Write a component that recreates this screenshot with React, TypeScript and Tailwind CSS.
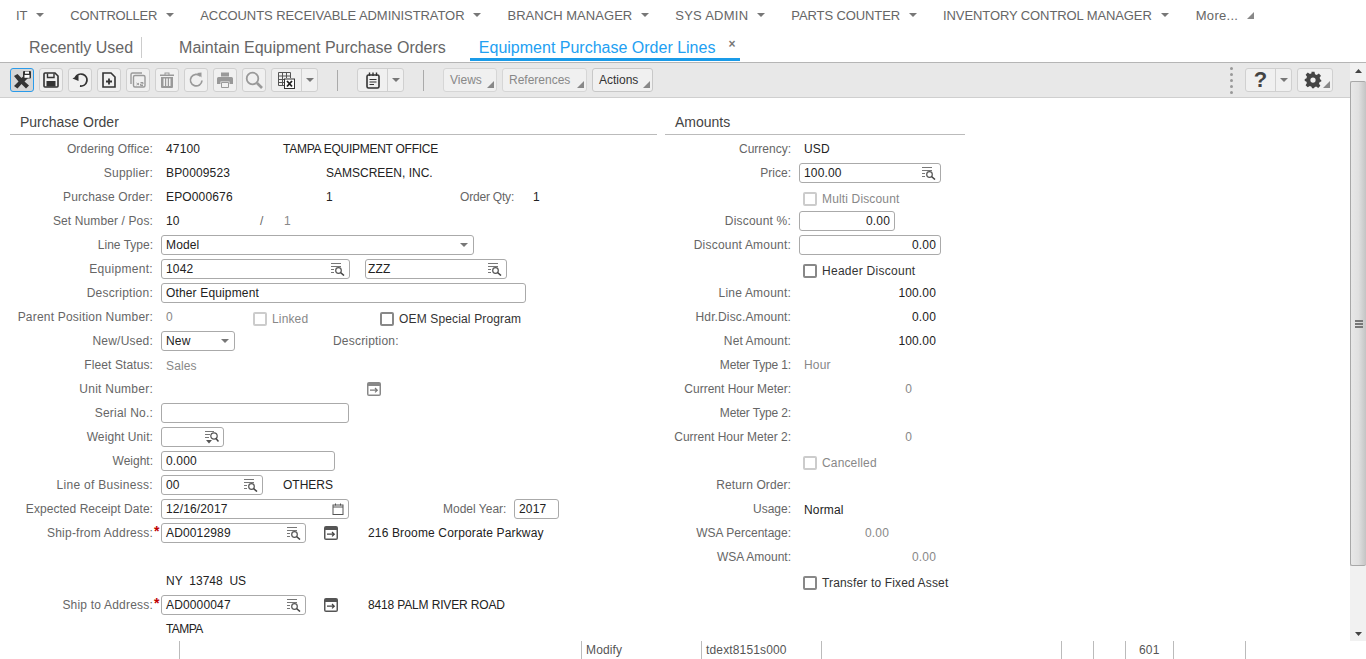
import type { ReactNode } from 'react';

const navItems = [
  { label: 'IT', track: 'tracking-[-0.1px]' },
  { label: 'CONTROLLER', track: 'tracking-[-0.2px]' },
  { label: 'ACCOUNTS RECEIVABLE ADMINISTRATOR', track: 'tracking-[-0.07px]' },
  { label: 'BRANCH MANAGER', track: 'tracking-[0.04px]' },
  { label: 'SYS ADMIN', track: 'tracking-[0.25px]' },
  { label: 'PARTS COUNTER', track: 'tracking-[-0.1px]' },
  { label: 'INVENTORY CONTROL MANAGER', track: 'tracking-[-0.1px]' },
];

const Corner = ({ className = '' }: { className?: string }) => (
  <svg width="7" height="7" viewBox="0 0 7 7" className={className}>
    <path d="M7 0V7H0Z" fill="#888" />
  </svg>
);

const Caret = () => (
  <svg width="8" height="4" viewBox="0 0 8 4" className="shrink-0">
    <path d="M0 0H8L4 4Z" fill="#777" />
  </svg>
);

const Lookup = () => (
  <svg width="14" height="13" viewBox="0 0 14 13" className="shrink-0">
    <path d="M0 .5H10M0 3.5H10M0 6.5H3M0 9.5H3" stroke="#777" fill="none" />
    <circle cx="7.5" cy="7.5" r="2.8" stroke="#555" strokeWidth="1.2" fill="#fff" />
    <path d="M9.5 9.5L13 12.5" stroke="#444" strokeWidth="1.6" />
  </svg>
);

const LookupDown = () => (
  <svg width="14" height="13" viewBox="0 0 14 13" className="shrink-0">
    <path d="M0 .5H9M0 3.5H5M0 6.5H4" stroke="#777" fill="none" />
    <circle cx="9" cy="5" r="3.2" stroke="#555" strokeWidth="1.2" fill="#fff" />
    <path d="M11 7.5L13.5 10.5" stroke="#444" strokeWidth="1.5" />
    <path d="M1 9H7L4 12.5Z" fill="#555" />
  </svg>
);

const Zoom = ({ dark = true }: { dark?: boolean }) => (
  <svg width="14" height="14" viewBox="0 0 14 14" className="shrink-0">
    <rect x="0" y="0" width="14" height="14" rx="2" fill={dark ? '#555' : '#888'} />
    <rect x="1.5" y="4" width="11" height="8.5" fill="#fff" />
    <path d="M3 8.2H10M8 6L10.3 8.2L8 10.4" stroke={dark ? '#444' : '#777'} fill="none" strokeWidth="1.2" />
  </svg>
);

const Field = ({ w, value = '', icon, pad = 'pl-1' }: { w: string; value?: string; icon?: ReactNode; pad?: string }) => (
  <div className={`${w} ${pad} h-5 shrink-0 rounded-[3px] border border-[#aaa] bg-white pr-1 flex items-center justify-between text-[#222]`}>
    <span className="flex-1">{value}</span>
    {icon}
  </div>
);

const Check = ({ label, disabled, className = '' }: { label: string; disabled?: boolean; className?: string }) => (
  <div className={`flex items-center gap-[5px] shrink-0 ${className}`}>
    <span className={`w-[14px] h-[14px] rounded-[2px] border-2 bg-white ${disabled ? 'border-[#ccc]' : 'border-[#888]'}`} />
    <span className={disabled ? 'text-[#888]' : 'text-[#333]'}>{label}</span>
  </div>
);

const Row = ({ label, required, track = 'tracking-[0.2px]', children }: { label?: string; required?: boolean; track?: string; children?: ReactNode }) => (
  <div className="h-6 flex items-center">
    <div className={`relative w-[153px] shrink-0 text-right text-[#666] ${track}`}>
      {label}
      {required && <span className="absolute left-[154px] -top-[3px] text-[#c00000] text-[14px] font-bold">*</span>}
    </div>
    <div className="ml-2 flex items-center flex-1">{children}</div>
  </div>
);

const RightRow = ({ label, track = 'tracking-normal', children }: { label?: string; track?: string; children?: ReactNode }) => (
  <div className="h-6 flex items-center">
    <div className={`w-[126px] shrink-0 text-right text-[#666] ${track}`}>{label}</div>
    <div className="ml-2 flex items-center flex-1">{children}</div>
  </div>
);

const ToolButton = ({ children, active }: { children: ReactNode; active?: boolean }) => (
  <div className={`w-6 h-6 rounded-[3px] border flex items-center justify-center shrink-0 ${active ? 'border-[#2a9bea] bg-[#d6d6d6]' : 'border-[#d0d0d0] bg-[#f0f0f0]'}`}>
    {children}
  </div>
);

const SplitButton = ({ children, w }: { children: ReactNode; w: string }) => (
  <div className={`${w} h-6 rounded-[3px] border border-[#d0d0d0] bg-[#f0f0f0] flex items-center shrink-0`}>
    <div className="flex-1 h-full flex items-center justify-center border-r border-[#d0d0d0]">{children}</div>
    <div className="w-[15px] flex justify-center"><Caret /></div>
  </div>
);

const MenuButton = ({ label, w, disabled }: { label: string; w: string; disabled?: boolean }) => (
  <div className={`${w} relative h-6 rounded-[3px] border bg-[#f0f0f0] flex items-center pl-[6px] shrink-0 ${disabled ? 'border-[#d6d6d6] text-[#888]' : 'border-[#c8c8c8] text-[#333]'}`}>
    {label}
    <Corner className="absolute right-[2px] bottom-[3px]" />
  </div>
);

export default function App() {
  return (
    <div className="w-[1366px] h-[659px] overflow-hidden bg-white text-xs tracking-[0.15px] flex flex-col" style={{ fontFamily: '"Liberation Sans", Arial, sans-serif' }}>
      {/* top menu */}
      <div className="h-[31px] pl-4 flex items-center gap-[26px] text-[13px] text-[#666] shrink-0">
        {navItems.map(n => (
          <div key={n.label} className="flex items-center gap-[9px]">
            <span className={n.track}>{n.label}</span>
            <Caret />
          </div>
        ))}
        <div className="flex items-center gap-[9px] ml-px tracking-[0.3px] text-[#666]">
          <span>More...</span>
          <Corner />
        </div>
      </div>

      {/* tabs */}
      <div className="h-[32px] pl-[29px] flex items-start text-base tracking-normal text-[#666] border-b border-[#b5b5b5] shrink-0">
        <div className="h-[21px] flex items-center pr-2 border-r border-[#ccc] mt-[6px]">Recently Used</div>
        <div className="ml-[37px] h-[21px] flex items-center mt-[6px]">Maintain Equipment Purchase Orders</div>
        <div className="ml-[24px] w-[270px] h-[30px] pl-[9px] flex items-start border-b-[3px] border-[#1a9be8] text-[#22a0f2]">
          <span className="mt-[6px] h-[21px] flex items-center">Equipment Purchase Order Lines</span>
          <span className="ml-[13px] mt-[6px] text-[12px] leading-[14px] font-bold text-[#777]">×</span>
        </div>
      </div>

      <div className="flex-1 min-h-0 flex">
        <div className="flex-1 min-w-0 flex flex-col">
          {/* toolbar */}
          <div className="h-[35px] bg-[#e8e8e8] border-b border-[#cfcfcf] pl-[10px] pr-[17px] flex items-center tracking-normal shrink-0">
            <div className="flex items-center gap-[5px]">
              <ToolButton active>
                <svg width="20" height="20" viewBox="0 0 20 20">
                  <path d="M2 6L5.5 4L9.5 8L12 5.5L16 8L12.5 11.5L17 15.5L14 18.5L9.5 14L5.5 18.5L2 16L6.5 11.5Z" fill="#333" />
                  <rect x="11" y="1" width="8" height="7.5" rx="1" fill="#333" />
                  <rect x="13" y="1.5" width="4" height="2.2" fill="#fff" />
                  <rect x="12.5" y="5" width="5" height="2.8" fill="#fff" />
                </svg>
              </ToolButton>
              <ToolButton>
                <svg width="16" height="16" viewBox="0 0 16 16">
                  <path d="M2 1H12L15 4V14A1 1 0 0 1 14 15H2A1 1 0 0 1 1 14V2A1 1 0 0 1 2 1Z" fill="none" stroke="#333" strokeWidth="1.6" />
                  <path d="M4.5 1.5V5.5H11V1.5" fill="none" stroke="#333" strokeWidth="1.4" />
                  <rect x="3.5" y="9" width="9" height="5.5" fill="#333" />
                </svg>
              </ToolButton>
              <ToolButton>
                <svg width="16" height="16" viewBox="0 0 16 16" fill="none">
                  <path d="M3.5 5.5A6 6 0 1 1 8 14" stroke="#333" strokeWidth="1.8" />
                  <path d="M0.5 6.5L6.5 3V9Z" fill="#333" />
                </svg>
              </ToolButton>
              <ToolButton>
                <svg width="14" height="16" viewBox="0 0 14 16" fill="none">
                  <path d="M1 1H9L13 5V15H1Z" stroke="#333" strokeWidth="1.6" />
                  <path d="M4 9.5H10M7 6.5V12.5" stroke="#333" strokeWidth="1.8" />
                </svg>
              </ToolButton>
              <ToolButton>
                <svg width="16" height="16" viewBox="0 0 16 16" fill="none">
                  <path d="M1 12V2.5A1.5 1.5 0 0 1 2.5 1H12" stroke="#999" strokeWidth="1.4" />
                  <rect x="3.5" y="3.5" width="11.5" height="11.5" rx="1.5" stroke="#999" strokeWidth="1.4" />
                  <path d="M6.5 11L9 13M9 11L6.5 13M10.5 10.5H13V12H10.5V13.5H13" stroke="#999" />
                </svg>
              </ToolButton>
              <ToolButton>
                <svg width="14" height="16" viewBox="0 0 14 16" fill="#999">
                  <path d="M0 2.5H14V4H0ZM4.5 2.5V.5H9.5V2.5H8.5V1.5H5.5V2.5Z" />
                  <path d="M1 5H13V15A1 1 0 0 1 12 16H2A1 1 0 0 1 1 15ZM3.5 6.5V14H5V6.5ZM6.2 6.5V14H7.8V6.5ZM9 6.5V14H10.5V6.5Z" fillRule="evenodd" />
                </svg>
              </ToolButton>
              <ToolButton>
                <svg width="16" height="16" viewBox="0 0 16 16" fill="none">
                  <path d="M12.5 4.2A5.8 5.8 0 1 0 14 8.5" stroke="#999" strokeWidth="1.7" />
                  <path d="M9 1L13.5 .5V5.5Z" fill="#999" />
                </svg>
              </ToolButton>
              <ToolButton>
                <svg width="16" height="16" viewBox="0 0 16 16" fill="#999">
                  <path d="M4 0.5H12V4.5H4Z" />
                  <path d="M1.5 5H14.5A1.5 1.5 0 0 1 16 6.5V12H12.5V9.5H3.5V12H0V6.5A1.5 1.5 0 0 1 1.5 5Z" />
                  <path d="M4.5 10.5H11.5V15.5H4.5Z" fill="#f0f0f0" stroke="#999" />
                </svg>
              </ToolButton>
              <ToolButton>
                <svg width="18" height="18" viewBox="0 0 18 18" fill="none">
                  <circle cx="7.5" cy="7.5" r="5.8" stroke="#999" strokeWidth="1.8" />
                  <path d="M12 12L17 17" stroke="#999" strokeWidth="2.6" />
                </svg>
              </ToolButton>
              <SplitButton w="w-[47px]">
                <svg width="17" height="17" viewBox="0 0 17 17" fill="none">
                  <path d="M.5 .5H12.5V6M.5 .5V13.5H6M.5 4H12.5M.5 7.5H6M.5 10.5H6M4.5 .5V13.5M8.5 .5V6" stroke="#555" />
                  <rect x="6.5" y="7" width="10" height="9.5" fill="#fff" stroke="#333" />
                  <path d="M9 9L14 14.5M14 9L9 14.5" stroke="#222" strokeWidth="1.8" />
                </svg>
              </SplitButton>
            </div>
            <div className="w-px h-[21px] bg-[#aaa] ml-[19px]" />
            <div className="ml-[19px]">
              <SplitButton w="w-[47px]">
                <svg width="14" height="17" viewBox="0 0 14 17" fill="none">
                  <rect x="1" y="3" width="12" height="13" rx="1.5" stroke="#333" strokeWidth="1.6" />
                  <path d="M3.5 .5V4M7 .5V4M10.5 .5V4" stroke="#333" strokeWidth="1.4" />
                  <path d="M3.5 7.5H10.5M3.5 10H10.5M3.5 12.5H8" stroke="#333" strokeWidth="1.2" />
                </svg>
              </SplitButton>
            </div>
            <div className="w-px h-[21px] bg-[#aaa] ml-[19px]" />
            <div className="ml-[19px] flex items-center gap-[5px]">
              <MenuButton label="Views" w="w-[54px]" disabled />
              <MenuButton label="References" w="w-[85px]" disabled />
              <MenuButton label="Actions" w="w-[61px]" />
            </div>
            <div className="ml-auto flex items-center">
              <div className="flex flex-col gap-[3px] mr-3">
                {[0, 1, 2, 3, 4].map(i => <span key={i} className="w-[3px] h-[3px] rounded-full bg-[#999]" />)}
              </div>
              <div className="w-[47px] h-6 rounded-[3px] border border-[#d0d0d0] bg-[#f0f0f0] flex items-center">
                <div className="w-[30px] h-full flex items-center justify-center border-r border-[#d0d0d0] text-[22px] font-bold text-[#444]">?</div>
                <div className="flex-1 flex justify-center"><Caret /></div>
              </div>
              <div className="relative w-9 h-6 ml-[5px] rounded-[3px] border border-[#d0d0d0] bg-[#f0f0f0] flex items-center pl-[6px]">
                <svg width="18" height="18" viewBox="0 0 24 24" fill="#444">
                  <path fillRule="evenodd" d="M10 1H14L14.7 4.3L16.9 5.2L19.8 3.4L22.6 6.2L20.8 9.1L21.7 11.3L23 12V14L20.9 14.7L20 16.9L21.8 19.8L19 22.6L16.1 20.8L14 21.7L13.3 23H10.7L10 20.9L7.8 20L4.9 21.8L2.1 19L3.9 16.1L3 14L1 13.3V10.7L3.1 10L4 7.8L2.2 4.9L5 2.1L7.9 3.9L10 3ZM12 8.5A3.5 3.5 0 1 0 12 15.5A3.5 3.5 0 1 0 12 8.5Z" />
                </svg>
                <Corner className="absolute right-[2px] bottom-[3px]" />
              </div>
            </div>
          </div>

          {/* form area */}
          <div className="flex-1 min-h-0 flex overflow-hidden">
            <div className="w-[665px] shrink-0">
              <div className="mt-[12px] ml-[10px] w-[647px] h-[25px] border-b border-[#bbb] pl-[10px] pt-[3px] text-[14px] tracking-normal text-[#444] leading-[18px] mb-[2px]">Purchase Order</div>
              <Row label="Ordering Office:" track="tracking-[0.1px]"><span className="ml-[5px] w-[117px] text-[#222]">47100</span><span className="text-[#222] tracking-[-0.26px]">TAMPA EQUIPMENT OFFICE</span></Row>
              <Row label="Supplier:"><span className="ml-[5px] w-[160px] text-[#222]">BP0009523</span><span className="text-[#222] tracking-normal">SAMSCREEN, INC.</span></Row>
              <Row label="Purchase Order:" track="tracking-[0.13px]"><span className="ml-[5px] w-[160px] text-[#222]">EPO000676</span><span className="w-[134px] text-[#222]">1</span><span className="w-[73px] text-[#666] tracking-[-0.2px]">Order Qty:</span><span className="text-[#222]">1</span></Row>
              <Row label="Set Number / Pos:" track="tracking-[0.12px]"><span className="ml-[5px] w-[94px] text-[#222]">10</span><span className="w-[24px] text-[#666]">/</span><span className="text-[#888]">1</span></Row>
              <Row label="Line Type:" track="tracking-normal">
                <div className="w-[313px] h-5 rounded-[3px] border border-[#aaa] pl-1 pr-[5px] flex items-center justify-between text-[#222]">Model<Caret /></div>
              </Row>
              <Row label="Equipment:" track="tracking-[0.3px]">
                <Field w="w-[189px]" value="1042" icon={<Lookup />} />
                <div className="ml-[15px]"><Field w="w-[142px]" pad="pl-[2px]" value="ZZZ" icon={<Lookup />} /></div>
              </Row>
              <Row label="Description:" track="tracking-[0.25px]"><Field w="w-[365px]" value="Other Equipment" /></Row>
              <Row label="Parent Position Number:">
                <span className="ml-[5px] w-[87px] text-[#888]">0</span>
                <Check label="Linked" disabled className="w-[127px] mt-[3px]" />
                <Check label="OEM Special Program" className="mt-[3px]" />
              </Row>
              <Row label="New/Used:">
                <div className="w-[74px] h-5 rounded-[3px] border border-[#aaa] pl-1 pr-[5px] flex items-center justify-between text-[#222]">New<Caret /></div>
                <span className="ml-[98px] text-[#666] tracking-[0.2px]">Description:</span>
              </Row>
              <Row label="Fleet Status:" track="tracking-[0.1px]"><span className="ml-[5px] mt-[1px] text-[#888]">Sales</span></Row>
              <Row label="Unit Number:" track="tracking-[0.25px]"><div className="ml-[206px]"><Zoom dark={false} /></div></Row>
              <Row label="Serial No.:"><Field w="w-[188px]" /></Row>
              <Row label="Weight Unit:" track="tracking-[0.1px]"><Field w="w-[63px]" icon={<LookupDown />} /></Row>
              <Row label="Weight:" track="tracking-normal"><Field w="w-[174px]" value="0.000" /></Row>
              <Row label="Line of Business:" track="tracking-[0.3px]"><Field w="w-[102px]" value="00" icon={<Lookup />} /><span className="ml-5 text-[#222] tracking-normal">OTHERS</span></Row>
              <Row label="Expected Receipt Date:" track="tracking-[0.05px]">
                <Field w="w-[188px]" value="12/16/2017" icon={
                  <svg width="12" height="12" viewBox="0 0 12 12" fill="none">
                    <rect x="1" y="2" width="10" height="9.5" stroke="#555" />
                    <path d="M1 4H11M3.5 .5V2.5M8.5 .5V2.5" stroke="#555" />
                  </svg>
                } />
                <span className="ml-[94px] w-[71px] text-[#666] tracking-normal">Model Year:</span>
                <Field w="w-[45px]" value="2017" />
              </Row>
              <Row label="Ship-from Address:" required track="tracking-[0.22px]">
                <Field w="w-[145px]" value="AD0012989" icon={<Lookup />} />
                <div className="ml-[18px]"><Zoom /></div>
                <span className="ml-[30px] text-[#222]">216 Broome Corporate Parkway</span>
              </Row>
              <Row />
              <Row><span className="ml-[5px] text-[#222] tracking-normal">NY&nbsp;&nbsp;13748&nbsp;&nbsp;US</span></Row>
              <Row label="Ship to Address:" required>
                <Field w="w-[145px]" value="AD0000047" icon={<Lookup />} />
                <div className="ml-[18px]"><Zoom /></div>
                <span className="ml-[30px] text-[#222] tracking-[-0.15px]">8418 PALM RIVER ROAD</span>
              </Row>
              <Row><span className="ml-[5px] text-[#222] tracking-[-0.6px]">TAMPA</span></Row>
            </div>

            <div className="w-[301px] shrink-0">
              <div className="mt-[12px] w-[300px] h-[25px] border-b border-[#bbb] pl-[10px] pt-[3px] text-[14px] tracking-normal text-[#444] leading-[18px] mb-[2px]">Amounts</div>
              <RightRow label="Currency:"><span className="ml-[5px] text-[#222]">USD</span></RightRow>
              <RightRow label="Price:"><Field w="w-[142px]" value="100.00" icon={<Lookup />} /></RightRow>
              <RightRow><Check label="Multi Discount" disabled className="ml-1 mt-[3px]" /></RightRow>
              <RightRow label="Discount %:" track="tracking-[0.2px]"><div className="w-[96px] h-5 rounded-[3px] border border-[#aaa] px-1 flex items-center justify-end text-[#222]">0.00</div></RightRow>
              <RightRow label="Discount Amount:" track="tracking-[0.2px]"><div className="w-[142px] h-5 rounded-[3px] border border-[#aaa] px-1 flex items-center justify-end text-[#222]">0.00</div></RightRow>
              <RightRow><Check label="Header Discount" className="ml-1 mt-[3px] tracking-[0.27px]" /></RightRow>
              <RightRow label="Line Amount:" track="tracking-[0.2px]"><span className="w-[137px] text-right text-[#222]">100.00</span></RightRow>
              <RightRow label="Hdr.Disc.Amount:" track="tracking-[0.13px]"><span className="w-[137px] text-right text-[#222]">0.00</span></RightRow>
              <RightRow label="Net Amount:" track="tracking-[0.1px]"><span className="w-[137px] text-right text-[#222]">100.00</span></RightRow>
              <RightRow label="Meter Type 1:" track="tracking-[-0.15px]"><span className="ml-[5px] text-[#888]">Hour</span></RightRow>
              <RightRow label="Current Hour Meter:"><span className="w-[113px] text-right text-[#888]">0</span></RightRow>
              <RightRow label="Meter Type 2:" track="tracking-[-0.15px]" />
              <RightRow label="Current Hour Meter 2:"><span className="w-[113px] text-right text-[#888]">0</span></RightRow>
              <RightRow><Check label="Cancelled" disabled className="ml-1 mt-[3px]" /></RightRow>
              <RightRow label="Return Order:" track="tracking-[0.1px]" />
              <RightRow label="Usage:"><span className="ml-[5px] mt-[1px] text-[#222]">Normal</span></RightRow>
              <RightRow label="WSA Percentage:"><span className="w-[90px] text-right text-[#888]">0.00</span></RightRow>
              <RightRow label="WSA Amount:"><span className="w-[137px] text-right text-[#888]">0.00</span></RightRow>
              <RightRow><Check label="Transfer to Fixed Asset" className="ml-1 mt-[3px]" /></RightRow>
            </div>
          </div>
        </div>

        {/* scrollbar */}
        <div className="w-4 bg-[#f1f1f1] flex flex-col items-center shrink-0">
          <svg width="7" height="4" viewBox="0 0 7 4" className="mt-[6px] shrink-0"><path d="M0 4H7L3.5 0Z" fill="#444" /></svg>
          <div className="mt-[8px] w-4 h-[485px] rounded-[2px] border-l border-t border-b border-[#a8a8a8] bg-gradient-to-r from-[#e8e8e8] via-[#e0e0e0] to-[#c4c4c4] flex flex-col items-center justify-center gap-px">
            <span className="w-[8px] h-[2px] bg-[#777]" />
            <span className="w-[8px] h-[2px] bg-[#777]" />
            <span className="w-[8px] h-[2px] bg-[#777]" />
          </div>
          <svg width="7" height="4" viewBox="0 0 7 4" className="mt-auto mb-[5px] shrink-0"><path d="M0 0H7L3.5 4Z" fill="#444" /></svg>
        </div>
      </div>

      {/* status bar */}
      <div className="h-[18px] flex text-[#555] shrink-0 leading-[18px]">
        <div className="w-[180px] border-r border-[#bbb]" />
        <div className="w-[402px] border-r border-[#bbb]" />
        <div className="w-[120px] pl-1 border-r border-[#bbb]">Modify</div>
        <div className="w-[120px] pl-1 border-r border-[#bbb]">tdext8151s000</div>
        <div className="w-[240px] border-r border-[#bbb]" />
        <div className="w-8 border-r border-[#bbb]" />
        <div className="w-8 border-r border-[#bbb]" />
        <div className="w-12 pl-[13px] border-r border-[#bbb]">601</div>
        <div className="w-[72px] border-r border-[#bbb]" />
      </div>
    </div>
  );
}
